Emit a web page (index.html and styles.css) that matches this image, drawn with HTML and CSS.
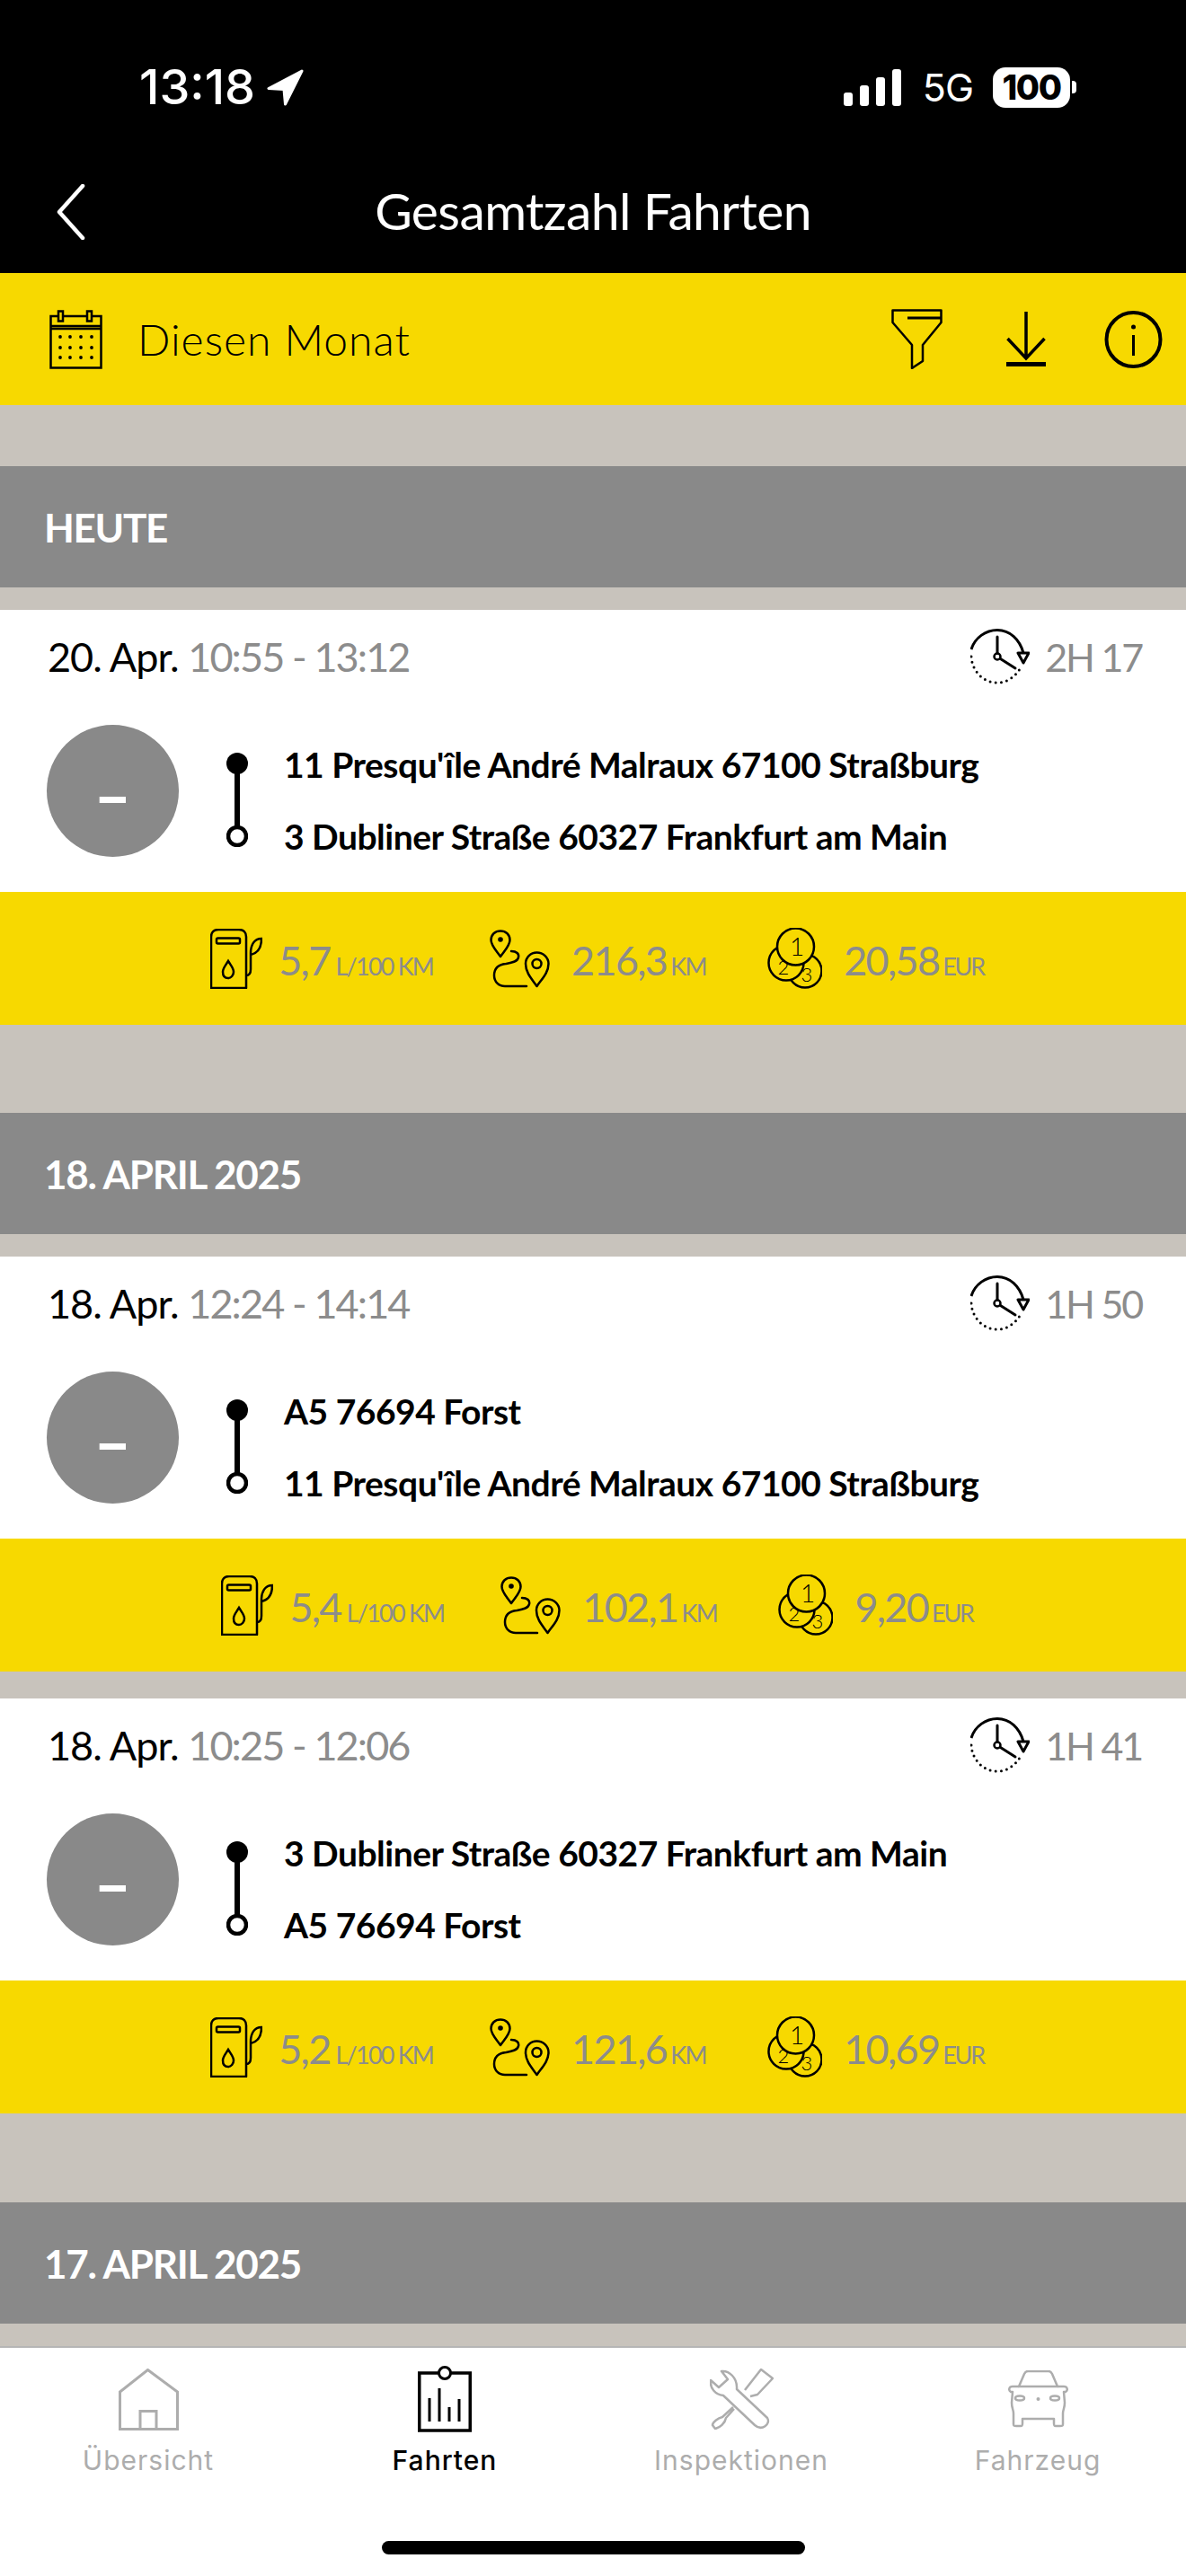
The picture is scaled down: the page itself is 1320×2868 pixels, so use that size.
FILE: index.html
```html
<!DOCTYPE html>
<html lang="de">
<head>
    <meta charset="UTF-8">
    <meta name="viewport" content="width=device-width, initial-scale=1.0">
    <title>Gesamtzahl Fahrten</title>
    <link rel="stylesheet" href="styles.css">
</head>
<body>

<!-- Icons, die mehrfach vorkommen -->
<svg class="sprite" width="0" height="0">
    <symbol id="i-clock" viewBox="0 0 66 62">
        <path d="M1 23C5 10 17 1.500 30 1.500C44 1.500 55 12 59 27" fill="none" stroke="#000" stroke-width="3"/>
        <path d="M1 31C2 47 14 60 30 60C42 60 52 52 57 41" fill="none" stroke="#000" stroke-width="3" stroke-linecap="round" stroke-dasharray="0 6.200"/>
        <path d="M53 27H65L59 38Z" fill="#fff" stroke="#000" stroke-width="3" stroke-linejoin="round"/>
        <path d="M30 9V27M33.500 33.500L50 44" fill="none" stroke="#000" stroke-width="3" stroke-linecap="round"/>
        <circle cx="30" cy="31" r="3.500" fill="none" stroke="#000" stroke-width="2.500"/>
    </symbol>
    <symbol id="i-fuel" viewBox="0 0 58 67">
        <path d="M1 66V9C1 4 4 1 9 1H32C37 1 40 4 40 9V66Z" fill="none" stroke="#000" stroke-width="2.500" stroke-linejoin="round"/>
        <rect x="7" y="10.500" width="26" height="6" rx="1.500" fill="none" stroke="#000" stroke-width="2.500"/>
        <path d="M20 36C23 41 26 44 26 48C26 52 23 55 20 55C16 55 14 52 14 48C14 44 17 41 20 36Z" fill="none" stroke="#000" stroke-width="2.500"/>
        <path d="M40 52C44 52 45 49 45 45V27C45 18 49 11 57 11C57 20 54 27 45 29" fill="none" stroke="#000" stroke-width="2.500"/>
    </symbol>
    <symbol id="i-route" viewBox="0 0 67 65">
        <path d="M12 30C8 24 1.500 18 1.500 11.500C1.500 5.500 6 1.500 12 1.500C18 1.500 22.500 5.500 22.500 11.500C22.500 18 16 24 12 30Z" fill="none" stroke="#000" stroke-width="2.500" stroke-linejoin="round"/>
        <circle cx="12" cy="11" r="2.800"/>
        <path d="M52.500 63C47 55 40 48 40 38C40 31 45.500 25.500 52.500 25.500C59.500 25.500 65.500 31 65.500 38C65.500 48 58 55 52.500 63Z" fill="none" stroke="#000" stroke-width="2.500" stroke-linejoin="round"/>
        <circle cx="52.500" cy="38" r="5" fill="none" stroke="#000" stroke-width="2.500"/>
        <path d="M24 24C30 24 33 27 32 31C31 36 24 37 18 38C9 39 5 44 5 51C5 58 10 63 17 63H41" fill="none" stroke="#000" stroke-width="2.500" stroke-linecap="round"/>
    </symbol>
    <symbol id="i-stops" viewBox="0 0 24 105">
        <ellipse cx="12" cy="12" rx="12" ry="12"/>
        <rect x="9" y="22" width="6" height="62"/>
        <circle cx="12" cy="93" r="10" fill="#fff" stroke="#000" stroke-width="4.500"/>
    </symbol>
</svg>

<div class="screen">
    <header class="top">
        <div class="status">
            <div class="status-left">
                <span class="clock">13:18</span>
                <svg class="nav-arrow" viewBox="0 0 41 41"><path d="M39 2L2 21.500L19 22.500L20.500 39Z" fill="#fff" stroke="#fff" stroke-width="3" stroke-linejoin="round"/></svg>
            </div>
            <div class="status-right">
                <div class="signal"><i></i><i></i><i></i><i></i></div>
                <span class="net">5G</span>
                <div class="battery"><span>100</span></div>
                <div class="battery-cap"></div>
            </div>
        </div>
        <div class="title-row">
            <svg class="back" viewBox="0 0 32 62"><path d="M29 2L3 31L29 60" fill="none" stroke="#fff" stroke-width="4.500" stroke-linecap="round" stroke-linejoin="round"/></svg>
            <h1>Gesamtzahl Fahrten</h1>
        </div>
    </header>

    <div class="period">
        <svg class="cal" viewBox="0 0 59 66" fill="none" stroke="#000" stroke-width="2.500">
            <rect x="1.500" y="7" width="56" height="57.500"/>
            <path d="M1.500 18H57.500M1.500 21H57.500"/>
            <rect x="10" y="1.500" width="5" height="11" fill="#f7d900"/>
            <rect x="42" y="1.500" width="5" height="11" fill="#f7d900"/>
            <g fill="#000" stroke="none">
                <circle cx="12" cy="30" r="1.900"/><circle cx="23" cy="30" r="1.900"/><circle cx="35" cy="30" r="1.900"/><circle cx="47" cy="30" r="1.900"/>
                <circle cx="12" cy="42" r="1.900"/><circle cx="23" cy="42" r="1.900"/><circle cx="35" cy="42" r="1.900"/><circle cx="47" cy="42" r="1.900"/>
                <circle cx="12" cy="53" r="1.900"/><circle cx="23" cy="53" r="1.900"/><circle cx="35" cy="53" r="1.900"/><circle cx="47" cy="53" r="1.900"/>
            </g>
        </svg>
        <span class="period-label">Diesen Monat</span>
        <div class="period-actions">
            <svg class="filter" viewBox="0 0 57 67" fill="none" stroke="#000" stroke-width="2.500" stroke-linejoin="round">
                <path d="M1.500 1.500H55.500V15L35 40V58L23 66V40L1.500 15Z"/>
                <path d="M18 10H55.500" stroke-width="3"/>
            </svg>
            <svg class="download" viewBox="0 0 44 61" fill="none" stroke="#000" stroke-width="3.500">
                <path d="M22 0V50M1.500 30L22 52L42.500 30"/>
                <rect x="0" y="56" width="44" height="5" fill="#000" stroke="none"/>
            </svg>
            <svg class="info" viewBox="0 0 65 64" fill="none" stroke="#000">
                <circle cx="32.500" cy="32" r="30" stroke-width="4"/>
                <path d="M32.500 27V50" stroke-width="3"/>
                <circle cx="32.500" cy="18" r="2.500" fill="#000" stroke="none"/>
            </svg>
        </div>
    </div>

    <main class="list">
        <h2 class="day">HEUTE</h2>
        <article class="trip">
            <div class="trip-head">
                <p class="when">20. Apr. <span>10:55 - 13:12</span></p>
                <p class="duration"><svg class="clock-icon"><use href="#i-clock"/></svg><span>2H 17</span></p>
            </div>
            <div class="trip-body">
                <div class="score">–</div>
                <svg class="stops"><use href="#i-stops"/></svg>
                <div class="places">
                    <p>11 Presqu'île André Malraux 67100 Straßburg</p>
                    <p>3 Dubliner Straße 60327 Frankfurt am Main</p>
                </div>
            </div>
            <div class="stats">
                <div class="stat stat-fuel"><svg class="fuel"><use href="#i-fuel"/></svg><span class="stat-val"><b>5,7</b><small>L/100 KM</small></span></div>
                <div class="stat"><svg class="route"><use href="#i-route"/></svg><span class="stat-val"><b>216,3</b><small class="km">KM</small></span></div>
                <div class="stat">
                    <svg class="coins" viewBox="0 0 61 68">
                        <circle cx="42" cy="48" r="18.500" fill="none" stroke="#000" stroke-width="2.500"/>
                        <text class="coin-digit coin-low" x="44" y="60">3</text>
                        <circle cx="21" cy="39" r="19.500" fill="#f7d900" stroke="#000" stroke-width="2.500"/>
                        <text class="coin-digit coin-low" x="18" y="52">2</text>
                        <circle cx="31.500" cy="21" r="20.500" fill="#f7d900" stroke="#000" stroke-width="2.500"/>
                        <text class="coin-digit" x="33" y="31">1</text>
                    </svg>
                    <span class="stat-val"><b>20,58</b><small class="eur">EUR</small></span>
                </div>
            </div>
        </article>

        <h2 class="day day-next">18. APRIL 2025</h2>
        <article class="trip">
            <div class="trip-head">
                <p class="when">18. Apr. <span>12:24 - 14:14</span></p>
                <p class="duration"><svg class="clock-icon"><use href="#i-clock"/></svg><span>1H 50</span></p>
            </div>
            <div class="trip-body">
                <div class="score">–</div>
                <svg class="stops"><use href="#i-stops"/></svg>
                <div class="places">
                    <p>A5 76694 Forst</p>
                    <p>11 Presqu'île André Malraux 67100 Straßburg</p>
                </div>
            </div>
            <div class="stats">
                <div class="stat stat-fuel"><svg class="fuel"><use href="#i-fuel"/></svg><span class="stat-val"><b>5,4</b><small>L/100 KM</small></span></div>
                <div class="stat"><svg class="route"><use href="#i-route"/></svg><span class="stat-val"><b>102,1</b><small class="km">KM</small></span></div>
                <div class="stat">
                    <svg class="coins" viewBox="0 0 61 68">
                        <circle cx="42" cy="48" r="18.500" fill="none" stroke="#000" stroke-width="2.500"/>
                        <text class="coin-digit coin-low" x="44" y="60">3</text>
                        <circle cx="21" cy="39" r="19.500" fill="#f7d900" stroke="#000" stroke-width="2.500"/>
                        <text class="coin-digit coin-low" x="18" y="52">2</text>
                        <circle cx="31.500" cy="21" r="20.500" fill="#f7d900" stroke="#000" stroke-width="2.500"/>
                        <text class="coin-digit" x="33" y="31">1</text>
                    </svg>
                    <span class="stat-val"><b>9,20</b><small class="eur">EUR</small></span>
                </div>
            </div>
        </article>

        <article class="trip trip-follow">
            <div class="trip-head">
                <p class="when">18. Apr. <span>10:25 - 12:06</span></p>
                <p class="duration"><svg class="clock-icon"><use href="#i-clock"/></svg><span>1H 41</span></p>
            </div>
            <div class="trip-body">
                <div class="score">–</div>
                <svg class="stops"><use href="#i-stops"/></svg>
                <div class="places">
                    <p>3 Dubliner Straße 60327 Frankfurt am Main</p>
                    <p>A5 76694 Forst</p>
                </div>
            </div>
            <div class="stats">
                <div class="stat stat-fuel"><svg class="fuel"><use href="#i-fuel"/></svg><span class="stat-val"><b>5,2</b><small>L/100 KM</small></span></div>
                <div class="stat"><svg class="route"><use href="#i-route"/></svg><span class="stat-val"><b>121,6</b><small class="km">KM</small></span></div>
                <div class="stat">
                    <svg class="coins" viewBox="0 0 61 68">
                        <circle cx="42" cy="48" r="18.500" fill="none" stroke="#000" stroke-width="2.500"/>
                        <text class="coin-digit coin-low" x="44" y="60">3</text>
                        <circle cx="21" cy="39" r="19.500" fill="#f7d900" stroke="#000" stroke-width="2.500"/>
                        <text class="coin-digit coin-low" x="18" y="52">2</text>
                        <circle cx="31.500" cy="21" r="20.500" fill="#f7d900" stroke="#000" stroke-width="2.500"/>
                        <text class="coin-digit" x="33" y="31">1</text>
                    </svg>
                    <span class="stat-val"><b>10,69</b><small class="eur">EUR</small></span>
                </div>
            </div>
        </article>

        <h2 class="day day-next">17. APRIL 2025</h2>
    </main>

    <nav class="tabs">
        <a class="tab">
            <div class="tab-pic">
                <svg class="ic-home" viewBox="0 0 67 69" fill="none" stroke="#adadad" stroke-width="3">
                    <path d="M1.500 67.500V26L32.500 1.500L65.500 26V67.500Z"/>
                    <path d="M24 67V47.500H42V67"/>
                </svg>
            </div>
            <span>Übersicht</span>
        </a>
        <a class="tab tab-active">
            <div class="tab-pic">
                <svg class="ic-trips" viewBox="0 0 60 74" fill="none" stroke="#000" stroke-width="3.500">
                    <rect x="1.750" y="8" width="56.500" height="64"/>
                    <circle cx="30" cy="8" r="6.500" fill="#fff" stroke-width="3"/>
                    <path d="M13 36V62M24 25V62M35 46V62M46 37V62" stroke-width="3"/>
                </svg>
            </div>
            <span>Fahrten</span>
        </a>
        <a class="tab">
            <div class="tab-pic">
                <svg class="ic-tools" viewBox="0 0 71 68" fill="none" stroke="#adadad" stroke-width="2.500" stroke-linejoin="round">
                    <path d="M13 3C21 2 31 10 30 23L64 55C68 62 58 70 50 63L15 30C6 29 0 22 1 13L10 21L20 12Z"/>
                    <path d="M39 24L57 1L70 11L53 29L45 31"/>
                    <path d="M26 43L14 54C9 55 3 60 3 63L6 67C11 66 17 61 18 55L27 45"/>
                </svg>
            </div>
            <span>Inspektionen</span>
        </a>
        <a class="tab">
            <div class="tab-pic">
                <svg class="ic-car" viewBox="0 0 67 64" fill="none" stroke="#adadad" stroke-width="2.500" stroke-linejoin="round">
                    <path d="M12 18L18 4C19 2 20 1 22 1H45C47 1 48 2 49 4L55 18Z"/>
                    <path d="M12 18H5C1 18 0 22 3 24H5L4 36C4 42 6 44 6 48V60C6 62 7 62 9 62H14C16 62 16 61 16 59V54H51V59C51 61 51 62 53 62H58C60 62 61 62 61 60V48C61 44 63 42 63 36L62 24H64C67 22 66 18 62 18H55"/>
                    <ellipse cx="13" cy="31" rx="5" ry="2.500"/>
                    <ellipse cx="52" cy="31" rx="5" ry="2.500"/>
                    <circle cx="33.500" cy="32" r="2" fill="#adadad" stroke="none"/>
                </svg>
            </div>
            <span>Fahrzeug</span>
        </a>
        <div class="home-bar"></div>
    </nav>
</div>

</body>
</html>
```

FILE: styles.css
```css
* {
    box-sizing: border-box;
}
body {
    margin: 0;
    font-family: "Lato", sans-serif;
    background-color: #fff;
}
p, h1, h2 {
    margin: 0;
    font-weight: normal;
}
svg {
    display: block;
    flex: none;
}
.sprite {
    position: absolute;
}
.coin-digit {
    font-family: "Lato", sans-serif;
    font-size: 28px;
    font-weight: 300;
    text-anchor: middle;
}
.coin-low {
    font-size: 22px;
}
.screen {
    display: flex;
    flex-direction: column;
    height: 2868px;
    overflow: hidden;
}

/* Kopfbereich */
.top {
    height: 304px;
    background-color: #000;
    color: #fff;
}
.status {
    display: flex;
    justify-content: space-between;
    align-items: center;
    height: 120px;
    padding: 74px 122px 0 155px;
    font-family: "Inter", sans-serif;
}
.status-left {
    display: flex;
    align-items: center;
    gap: 13px;
}
.clock {
    font-size: 54px;
    font-weight: 500;
    line-height: 46px;
}
.nav-arrow {
    width: 41px;
    height: 41px;
}
.status-right {
    display: flex;
    align-items: center;
}
.signal {
    display: flex;
    align-items: flex-end;
    gap: 8px;
    height: 41px;
    margin-right: 24px;
}
.signal i {
    display: block;
    width: 10px;
    border-radius: 3px;
    background-color: #fff;
}
.signal i:nth-child(1) { height: 15px; }
.signal i:nth-child(2) { height: 23px; }
.signal i:nth-child(3) { height: 32px; }
.signal i:nth-child(4) { height: 41px; }
.net {
    margin-right: 22px;
    font-size: 43px;
    font-weight: 400;
    letter-spacing: -1px;
}
.battery {
    display: flex;
    align-items: center;
    justify-content: center;
    width: 86px;
    height: 45px;
    border-radius: 14px;
    background-color: #fff;
}
.battery span {
    color: #000;
    font-size: 38px;
    font-weight: 800;
    letter-spacing: -1.500px;
}
.battery-cap {
    width: 5px;
    height: 14px;
    margin-left: 2px;
    border-radius: 0 4px 4px 0;
    background-color: #fff;
}
.title-row {
    position: relative;
    display: flex;
    justify-content: center;
    align-items: center;
    height: 184px;
    padding-top: 44px;
}
.title-row h1 {
    font-size: 57px;
    font-weight: 400;
    letter-spacing: -0.600px;
}
.back {
    position: absolute;
    left: 63px;
    top: 85px;
    width: 32px;
    height: 62px;
}

/* Gelbe Leiste */
.period {
    display: flex;
    align-items: center;
    height: 147px;
    padding: 0 26px 0 55px;
    background-color: #f7d900;
}
.cal {
    width: 59px;
    height: 66px;
    margin-right: 39px;
}
.period-label {
    flex: 1;
    font-size: 48px;
    font-weight: 300;
    letter-spacing: 1px;
}
.period-actions {
    display: flex;
    align-items: center;
}
.filter {
    width: 57px;
    height: 67px;
    margin-right: 71px;
}
.download {
    width: 44px;
    height: 61px;
    margin-right: 65px;
}
.info {
    width: 65px;
    height: 64px;
}

/* Liste */
.list {
    flex: 1;
    min-height: 0;
    overflow: hidden;
    padding-top: 68px;
    background-color: #c8c3bc;
}
.day {
    height: 135px;
    padding-left: 49px;
    background-color: #898989;
    color: #fff;
    font-size: 44px;
    font-weight: 700;
    line-height: 137px;
    letter-spacing: -1.300px;
}
.day-next {
    margin-top: 98px;
}
.trip-follow + .day-next {
    margin-top: 99px;
}
.trip {
    margin-top: 25px;
}
.trip-follow {
    margin-top: 30px;
}
.trip-head {
    display: flex;
    justify-content: space-between;
    align-items: center;
    height: 104px;
    padding: 0 49px 0 53px;
    background-color: #fff;
}
.when {
    font-size: 45px;
    letter-spacing: -1px;
    color: #000;
}
.when span {
    letter-spacing: -1.900px;
    color: #8c8c8c;
}
.duration {
    display: flex;
    align-items: center;
    gap: 17px;
    font-size: 43px;
    letter-spacing: -2.200px;
    color: #8c8c8c;
}
.clock-icon {
    width: 66px;
    height: 62px;
}
.trip-body {
    display: flex;
    align-items: flex-start;
    height: 210px;
    padding: 24px 0 38px 52px;
    background-color: #fff;
}
.score {
    display: flex;
    align-items: center;
    justify-content: center;
    width: 147px;
    height: 147px;
    margin-right: 53px;
    padding-top: 6px;
    border-radius: 50%;
    background-color: #898989;
    color: #fff;
    font-size: 72px;
    font-weight: 900;
}
.stops {
    width: 24px;
    height: 105px;
    margin-top: 31px;
    margin-right: 40px;
}
.places {
    display: flex;
    flex-direction: column;
    gap: 40px;
    margin-top: 24px;
    color: #000;
}
.places p {
    font-size: 39px;
    font-weight: 700;
    line-height: 40px;
    letter-spacing: -0.500px;
}
.stats {
    display: flex;
    justify-content: center;
    align-items: center;
    gap: 68px;
    height: 148px;
    padding-left: 9px;
    background-color: #f7d900;
}
.stat {
    display: flex;
    align-items: center;
    gap: 24px;
    color: #8c8c8c;
}
.stat-fuel {
    gap: 18px;
    margin-right: -5px;
}
.stat-val {
    display: flex;
    align-items: baseline;
    padding-top: 4px;
}
.stat b {
    font-size: 45px;
    font-weight: 400;
    letter-spacing: -1.700px;
}
.stat small {
    margin-left: 6px;
    font-size: 27px;
    letter-spacing: -1.800px;
}
.stat .km {
    margin-left: 4px;
    letter-spacing: -1.500px;
}
.stat .eur {
    margin-left: 4px;
    letter-spacing: -2.300px;
}
.fuel {
    width: 58px;
    height: 67px;
}
.route {
    width: 67px;
    height: 65px;
}
.coins {
    width: 61px;
    height: 68px;
}

/* Tab-Leiste */
.tabs {
    position: relative;
    display: grid;
    grid-template-columns: repeat(4, 1fr);
    height: 256px;
    padding-top: 20px;
    border-top: 2px solid #b5b5b5;
    background-color: #fff;
}
.tab {
    display: flex;
    flex-direction: column;
    align-items: center;
    font-family: "Inter", sans-serif;
    font-size: 30px;
    letter-spacing: 1px;
    color: #adadad;
}
.tab-active {
    color: #000;
    font-weight: 500;
}
.tab-pic {
    display: flex;
    align-items: center;
    height: 74px;
    margin-bottom: 13px;
}
.ic-home {
    width: 67px;
    height: 69px;
}
.ic-trips {
    width: 60px;
    height: 74px;
}
.ic-tools {
    width: 71px;
    height: 68px;
}
.ic-car {
    width: 67px;
    height: 64px;
}
.home-bar {
    position: absolute;
    left: 425px;
    top: 215px;
    width: 471px;
    height: 15px;
    border-radius: 8px;
    background-color: #000;
}
```
